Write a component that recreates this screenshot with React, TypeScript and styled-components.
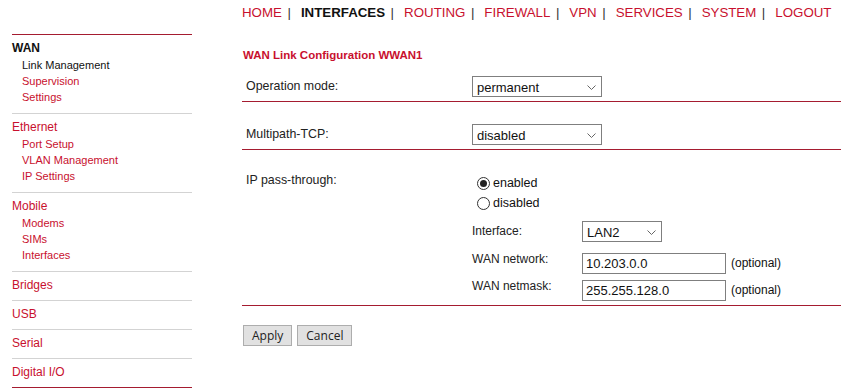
import React from "react";
import styled, { createGlobalStyle } from "styled-components";

const RED = "#c8102e";
const LINE = "#a51c30";

const Global = createGlobalStyle`
  html, body { margin: 0; padding: 0; background: #fff; }
  body { font-family: "Liberation Sans", Arial, sans-serif; color: #222; }
`;

const Page = styled.div`
  display: flex;
  align-items: flex-start;
  width: 841px;
  height: 392px;
  overflow: hidden;
`;

/* ---------- sidebar ---------- */
const Sidebar = styled.nav`
  width: 180px;
  flex-shrink: 0;
  margin-left: 12px;
  padding-top: 34px;
`;

const Group = styled.div<{ $first?: boolean; $last?: boolean }>`
  border-top: 1px solid ${(p) => (p.$first ? LINE : "#d3d3d3")};
  border-bottom: ${(p) => (p.$last ? `1px solid ${LINE}` : "none")};
  padding: 5px 0 7px;
`;

const GroupTitle = styled.a<{ $active?: boolean }>`
  display: block;
  font-size: 12px;
  line-height: 16px;
  color: ${(p) => (p.$active ? "#111" : RED)};
  font-weight: ${(p) => (p.$active ? 700 : 400)};
  text-decoration: none;
`;

const SubList = styled.div`
  padding: 1px 0 1px;
`;

const SubLink = styled.a<{ $active?: boolean }>`
  display: block;
  padding-left: 10px;
  font-size: 11px;
  line-height: 16px;
  color: ${(p) => (p.$active ? "#111" : RED)};
  text-decoration: none;
`;

/* ---------- main ---------- */
const Main = styled.main`
  flex: 1;
  min-width: 0;
  margin-left: 50px;
`;

const TopNav = styled.div`
  display: flex;
  align-items: center;
  height: 24px;
  font-size: 13.3px;
  white-space: nowrap;
`;

const NavLink = styled.a<{ $active?: boolean }>`
  color: ${(p) => (p.$active ? "#111" : RED)};
  font-weight: ${(p) => (p.$active ? 700 : 400)};
  text-decoration: none;
`;

const NavSep = styled.span`
  color: #333;
  margin: 0 10px 0 5.5px;
`;

const Title = styled.h1`
  margin: 24px 0 0 1px;
  font-size: 11.5px;
  line-height: 14px;
  font-weight: 700;
  color: ${RED};
`;

const Row = styled.div<{ $pt: number }>`
  display: flex;
  align-items: flex-start;
  padding: ${(p) => p.$pt}px 0 4px;
  border-bottom: 1px solid ${LINE};
`;

const Label = styled.div<{ $lh: number }>`
  width: 226px;
  padding-left: 4px;
  font-size: 12.4px;
  line-height: ${(p) => p.$lh}px;
  color: #222;
`;

const Value = styled.div<{ $pt?: number }>`
  padding-top: ${(p) => p.$pt ?? 0}px;
`;

const Select = styled.div<{ $w: number }>`
  box-sizing: border-box;
  width: ${(p) => p.$w}px;
  height: 21px;
  display: flex;
  align-items: center;
  justify-content: space-between;
  padding: 1px 5px 0 4px;
  border: 1px solid #7f7f7f;
  background: #fff;
  font-size: 13px;
  color: #111;
`;

const Chevron = () => (
  <svg width="9" height="5" viewBox="0 0 9 5">
    <path d="M0.5 0.5 L4.5 4.5 L8.5 0.5" fill="none" stroke="#666" strokeWidth="1" />
  </svg>
);

const RadioRow = styled.label`
  display: flex;
  align-items: center;
  height: 20px;
  font-size: 12.5px;
  color: #111;
`;

const RadioDot = styled.span<{ $on?: boolean }>`
  box-sizing: border-box;
  width: 13px;
  height: 13px;
  margin: 0 3px 0 5px;
  border: 1px solid #333;
  border-radius: 50%;
  display: flex;
  align-items: center;
  justify-content: center;
  &::after {
    content: "";
    display: ${(p) => (p.$on ? "block" : "none")};
    width: 7px;
    height: 7px;
    border-radius: 50%;
    background: #222;
  }
`;

const SubTable = styled.div`
  margin-top: 8px;
`;

const SubRow = styled.div<{ $h: number }>`
  display: flex;
  align-items: flex-start;
  height: ${(p) => p.$h}px;
`;

const SubLabel = styled.div<{ $lh: number }>`
  width: 110px;
  font-size: 12px;
  line-height: ${(p) => p.$lh}px;
  color: #222;
`;

const TextInput = styled.input`
  box-sizing: border-box;
  width: 144px;
  height: 21px;
  margin: 0;
  padding: 0 3px;
  border: 1px solid #7f7f7f;
  font-family: "Liberation Sans", Arial, sans-serif;
  font-size: 13px;
  color: #111;
  outline: none;
`;

const Hint = styled.span`
  margin-left: 5px;
  font-size: 12px;
  line-height: 21px;
  color: #111;
`;

const ButtonBar = styled.div`
  display: flex;
  gap: 5px;
  margin: 19px 0 0 1px;
`;

const Button = styled.button`
  height: 21px;
  padding: 0 8px;
  border: 1px solid #adadad;
  background: #e1e1e1;
  font-family: "Open Sans", sans-serif;
  font-size: 12px;
  color: #222;
  line-height: 19px;
`;

const navItems = ["HOME", "INTERFACES", "ROUTING", "FIREWALL", "VPN", "SERVICES", "SYSTEM", "LOGOUT"];

const groups: { title: string; active?: boolean; subs?: { t: string; active?: boolean }[] }[] = [
  {
    title: "WAN",
    active: true,
    subs: [{ t: "Link Management", active: true }, { t: "Supervision" }, { t: "Settings" }],
  },
  { title: "Ethernet", subs: [{ t: "Port Setup" }, { t: "VLAN Management" }, { t: "IP Settings" }] },
  { title: "Mobile", subs: [{ t: "Modems" }, { t: "SIMs" }, { t: "Interfaces" }] },
  { title: "Bridges" },
  { title: "USB" },
  { title: "Serial" },
  { title: "Digital I/O" },
];

export default function App() {
  return (
    <>
      <Global />
      <Page>
        <Sidebar>
          {groups.map((g, i) => (
            <Group key={g.title} $first={i === 0} $last={i === groups.length - 1}>
              <GroupTitle $active={g.active}>{g.title}</GroupTitle>
              {g.subs && (
                <SubList>
                  {g.subs.map((s) => (
                    <SubLink key={s.t} $active={s.active}>
                      {s.t}
                    </SubLink>
                  ))}
                </SubList>
              )}
            </Group>
          ))}
        </Sidebar>
        <Main>
          <TopNav>
            {navItems.map((n, i) => (
              <React.Fragment key={n}>
                <NavLink $active={n === "INTERFACES"}>{n}</NavLink>
                {i < navItems.length - 1 && <NavSep>|</NavSep>}
              </React.Fragment>
            ))}
          </TopNav>
          <Title>WAN Link Configuration WWAN1</Title>

          <Row $pt={14}>
            <Label $lh={21}>Operation mode:</Label>
            <Value>
              <Select $w={130}>
                <span>permanent</span>
                <Chevron />
              </Select>
            </Value>
          </Row>

          <Row $pt={22}>
            <Label $lh={21}>Multipath-TCP:</Label>
            <Value>
              <Select $w={130}>
                <span>disabled</span>
                <Chevron />
              </Select>
            </Value>
          </Row>

          <Row $pt={22}>
            <Label $lh={16}>IP pass-through:</Label>
            <Value $pt={1}>
              <RadioRow>
                <RadioDot $on />
                enabled
              </RadioRow>
              <RadioRow>
                <RadioDot />
                disabled
              </RadioRow>
              <SubTable>
                <SubRow $h={32}>
                  <SubLabel $lh={21}>Interface:</SubLabel>
                  <Select $w={80}>
                    <span>LAN2</span>
                    <Chevron />
                  </Select>
                </SubRow>
                <SubRow $h={27}>
                  <SubLabel $lh={13}>WAN network:</SubLabel>
                  <TextInput readOnly value="10.203.0.0" />
                  <Hint>(optional)</Hint>
                </SubRow>
                <SubRow $h={21}>
                  <SubLabel $lh={13}>WAN netmask:</SubLabel>
                  <TextInput readOnly value="255.255.128.0" />
                  <Hint>(optional)</Hint>
                </SubRow>
              </SubTable>
            </Value>
          </Row>

          <ButtonBar>
            <Button>Apply</Button>
            <Button>Cancel</Button>
          </ButtonBar>
        </Main>
      </Page>
    </>
  );
}
